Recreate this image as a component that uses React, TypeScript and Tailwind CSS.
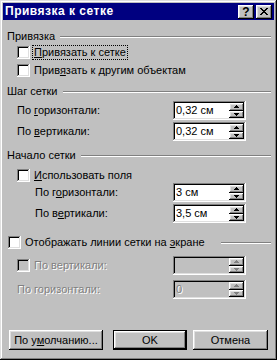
import React from "react";

const raised =
  "shadow-[inset_-1px_-1px_#000,inset_1px_1px_#fff,inset_-2px_-2px_#808080,inset_2px_2px_#dfdfdf]";
const sunken =
  "shadow-[inset_-1px_-1px_#fff,inset_1px_1px_#808080,inset_-2px_-2px_#dfdfdf,inset_2px_2px_#000]";
const dis = "text-[#808080] [text-shadow:1px_1px_0_#fff]";

function U({ children }: { children: React.ReactNode }) {
  return <span className="underline decoration-1 underline-offset-[1px]">{children}</span>;
}

function Groove({ className = "" }: { className?: string }) {
  return <div className={`flex-1 border-y border-t-[#808080] border-b-white ${className}`} />;
}

function Header({ label, className = "" }: { label: string; className?: string }) {
  return (
    <div className={`flex h-[13px] items-center ${className}`}>
      <span>{label}</span>
      <Groove className="ml-[5px]" />
    </div>
  );
}

function Box({ disabled }: { disabled?: boolean }) {
  return (
    <div
      className={`h-[13px] w-[13px] shrink-0 ${disabled ? "bg-[#c0c0c0]" : "bg-white"} ${sunken}`}
    />
  );
}

function Arrow({ up, disabled }: { up?: boolean; disabled?: boolean }) {
  const fill = disabled ? "#808080" : "#000";
  return (
    <svg width="5" height="3" viewBox="0 0 5 3" className="block">
      {up ? (
        <path d="M2 0h1v1h1v1h1v1H0V2h1V1h1z" fill={fill} />
      ) : (
        <path d="M0 0h5v1H4v1H3v1H2V2H1V1H0z" fill={fill} />
      )}
    </svg>
  );
}

function Spin({ value, disabled }: { value: string; disabled?: boolean }) {
  return (
    <div
      className={`flex h-[19px] w-[73px] shrink-0 p-[2px] ${disabled ? "bg-[#c0c0c0]" : "bg-white"} ${sunken}`}
    >
      <span className={`flex-1 pl-[1px] leading-[15px] ${disabled ? dis : ""}`}>{value}</span>
      <div className="flex w-[15px] flex-col">
        <div className={`flex flex-1 items-center justify-center bg-[#c0c0c0] ${raised}`}>
          <Arrow up disabled={disabled} />
        </div>
        <div className={`flex flex-1 items-center justify-center bg-[#c0c0c0] ${raised}`}>
          <Arrow disabled={disabled} />
        </div>
      </div>
    </div>
  );
}

function SpinRow({
  label,
  value,
  indent,
  disabled,
  className = "",
}: {
  label: React.ReactNode;
  value: string;
  indent: string;
  disabled?: boolean;
  className?: string;
}) {
  return (
    <div className={`flex h-[19px] items-center justify-between pr-[25px] ${indent} ${className}`}>
      <span className={disabled ? dis : ""}>{label}</span>
      <Spin value={value} disabled={disabled} />
    </div>
  );
}

function TitleBtn({ children, className = "" }: { children: React.ReactNode; className?: string }) {
  return (
    <div
      className={`flex h-[14px] w-[16px] items-center justify-center bg-[#c0c0c0] text-[12px] font-bold leading-none text-black ${raised} ${className}`}
    >
      {children}
    </div>
  );
}

function Button({
  children,
  className = "",
  isDefault,
}: {
  children: React.ReactNode;
  className?: string;
  isDefault?: boolean;
}) {
  if (isDefault) {
    return (
      <div className={`h-[20px] border border-black ${className}`}>
        <div className={`flex h-full items-center justify-center bg-[#c0c0c0] ${raised}`}>
          {children}
        </div>
      </div>
    );
  }
  return (
    <div className={`flex h-[20px] items-center justify-center bg-[#c0c0c0] ${raised} ${className}`}>
      {children}
    </div>
  );
}

export default function App() {
  return (
    <div
      className={`h-[360px] w-[277px] bg-[#c0c0c0] p-[3px] font-['Liberation_Sans',Arial,sans-serif] text-[11px] leading-[13px] text-black shadow-[inset_-1px_-1px_#000,inset_1px_1px_#dfdfdf,inset_-2px_-2px_#808080,inset_2px_2px_#fff]`}
    >
      <div className="flex h-[17px] items-center bg-[#000080] pl-[2px] pr-[2px]">
        <span className="flex-1 text-[12px] font-bold tracking-[0.5px] text-white">
          Привязка к сетке
        </span>
        <TitleBtn>?</TitleBtn>
        <TitleBtn className="ml-[2px]">
          <svg width="8" height="7" viewBox="0 0 8 7" className="block">
            <path
              d="M0 0h2v1h1v1h2V1h1V0h2v1H7v1H6v1H5v1h1v1h1v1h1v1H6V6H5V5H3v1H2v1H0V6h1V5h1V4h1V3H2V2H1V1H0z"
              fill="#000"
            />
          </svg>
        </TitleBtn>
      </div>

      <div className="flex flex-col pl-[4px] pr-[3px]">
        <Header label="Привязка" className="mt-[10px]" />
        <div className="mt-[3px] flex h-[13px] items-center pl-[10px]">
          <Box />
          <span className="ml-[2px] border border-dotted border-black px-[1px]">
            <U>П</U>ривязать к сетке
          </span>
        </div>
        <div className="mt-[5px] flex h-[13px] items-center pl-[10px]">
          <Box />
          <span className="ml-[4px]">
            Прив<U>я</U>зать к другим объектам
          </span>
        </div>

        <Header label="Шаг сетки" className="mt-[8px]" />
        <SpinRow
          className="mt-[3px]"
          indent="pl-[10px]"
          label={
            <>
              По <U>г</U>оризонтали:
            </>
          }
          value="0,32 см"
        />
        <SpinRow
          className="mt-[2px]"
          indent="pl-[10px]"
          label={
            <>
              По <U>в</U>ертикали:
            </>
          }
          value="0,32 см"
        />

        <Header label="Начало сетки" className="mt-[8px]" />
        <div className="mt-[7px] flex h-[13px] items-center pl-[10px]">
          <Box />
          <span className="ml-[4px]">
            <U>И</U>спользовать поля
          </span>
        </div>
        <SpinRow
          className="mt-[1px]"
          indent="pl-[28px]"
          label={
            <>
              По г<U>о</U>ризонтали:
            </>
          }
          value="3 см"
        />
        <SpinRow
          className="mt-[2px]"
          indent="pl-[28px]"
          label={
            <>
              По в<U>е</U>ртикали:
            </>
          }
          value="3,5 см"
        />

        <div className="mt-[13px] flex h-[13px] items-center pl-[1px]">
          <Box />
          <span className="ml-[4px]">
            Отображать линии сетки на <U>э</U>кране
          </span>
          <Groove className="ml-[16px]" />
        </div>

        <div className="mt-[7px] flex h-[19px] items-center justify-between pl-[10px] pr-[25px]">
          <div className="flex items-center">
            <Box disabled />
            <span className={`ml-[4px] ${dis}`}>По вертикали:</span>
          </div>
          <Spin value="" disabled />
        </div>
        <SpinRow
          className="mt-[5px]"
          indent="pl-[10px]"
          label="По горизонтали:"
          value="0"
          disabled
        />

        <div className="mt-[31px] flex pl-[2px]">
          <Button className="w-[94px]">
            <span>
              По у<U>м</U>олчанию...
            </span>
          </Button>
          <Button isDefault className="ml-[10px] w-[74px]">
            OK
          </Button>
          <Button className="ml-[6px] w-[75px]">Отмена</Button>
        </div>
      </div>
    </div>
  );
}
